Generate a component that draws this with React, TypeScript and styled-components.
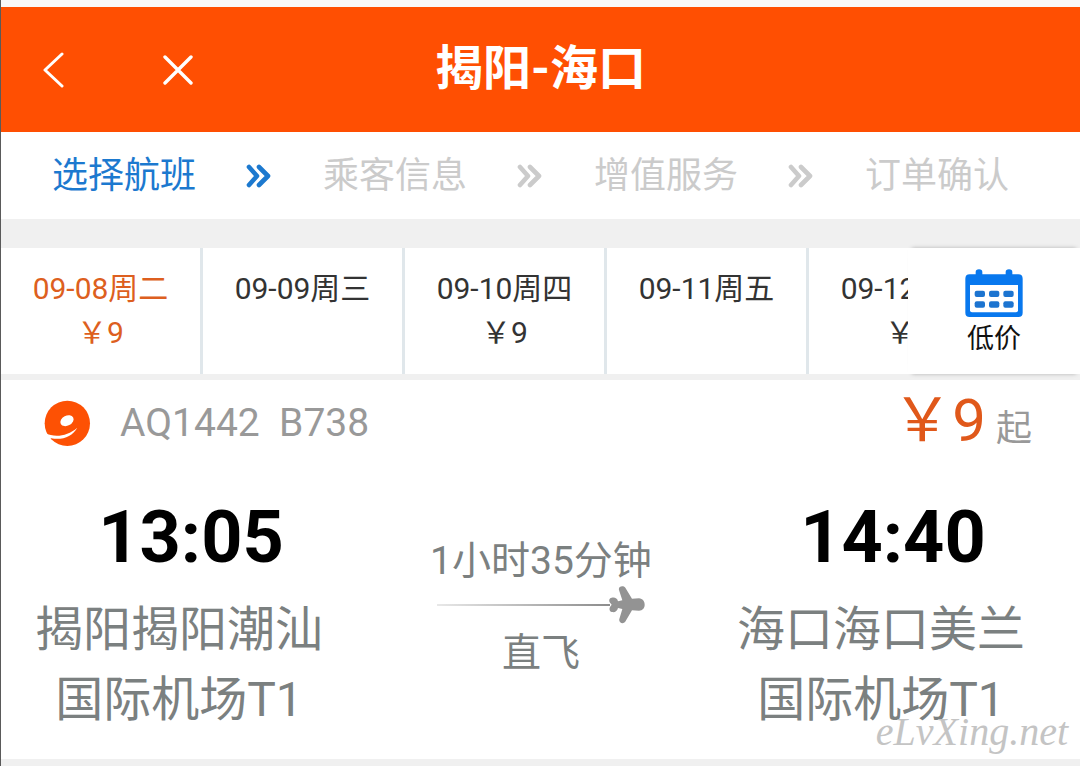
import React from "react";
import styled, { createGlobalStyle } from "styled-components";

const GlobalStyle = createGlobalStyle`
  * { box-sizing: border-box; }
  body {
    margin: 0;
    background: #f0f0f0;
    font-family: Roboto, "Noto Sans CJK SC", sans-serif;
  }
  button {
    margin: 0;
    padding: 0;
    border: 0;
    background: none;
    color: inherit;
    font: inherit;
    cursor: pointer;
  }
  h1, p, ol { margin: 0; padding: 0; }
`;

const Page = styled.div`
  position: relative;
  border-left: 1px solid #5a5a5a;
  padding-bottom: 7px;
  overflow: hidden;
`;

const StatusStrip = styled.div`
  height: 7px;
  background: #f9f8f8;
`;

const Header = styled.header`
  display: grid;
  grid-template-columns: 1fr auto 1fr;
  align-items: center;
  height: 125px;
  background: #ff4f02;
  color: #fff;
`;

const HeaderActions = styled.div`
  display: flex;
  gap: 74px;
  padding-left: 28px;
`;

const IconButton = styled.button`
  display: flex;
  align-items: center;
  justify-content: center;
  width: 50px;
  height: 50px;
`;

const Title = styled.h1`
  font-size: 48px;
  line-height: 60px;
  font-weight: 700;
  padding-bottom: 2px;
`;

const Steps = styled.ol`
  display: grid;
  grid-template-columns: repeat(4, 1fr);
  height: 87px;
  background: #fff;
  list-style: none;
`;

const Step = styled.li<{ $active?: boolean }>`
  display: flex;
  align-items: center;
  gap: 50px;
  padding-left: 51px;
  font-size: 36px;
  line-height: 48px;
  white-space: nowrap;
  color: ${(p) => (p.$active ? "#1c79cf" : "#cbcbcb")};
`;

const DateBar = styled.div`
  display: flex;
  height: 126px;
  margin: 29px 0 6px;
  background: #fff;
`;

const DateList = styled.nav`
  display: flex;
  flex: 1;
  min-width: 0;
  overflow: hidden;
`;

const DateButton = styled.button<{ $active?: boolean }>`
  flex: 0 0 202px;
  display: flex;
  flex-direction: column;
  align-items: center;
  padding-top: 19px;
  border-right: 3px solid #e0e7eb;
  font-size: 30px;
  line-height: 44px;
  white-space: nowrap;
  color: ${(p) => (p.$active ? "#dd5f20" : "#333")};
`;

const LowPrice = styled.button`
  flex: 0 0 172px;
  display: flex;
  flex-direction: column;
  align-items: center;
  gap: 7px;
  padding-top: 21px;
  background: #fff;
  box-shadow: 0 4px 4px -4px rgba(0, 0, 0, 0.25), 0 -4px 4px -4px rgba(0, 0, 0, 0.25);
  font-size: 27px;
  line-height: 30px;
  color: #111;
`;

const LowPriceLabel = styled.span`
  height: 26px;
  overflow: hidden;
`;

const Flight = styled.article`
  background: #fff;
  padding-bottom: 24px;
`;

const FlightHead = styled.div`
  display: flex;
  align-items: center;
  height: 86px;
  padding: 0 48px 0 42px;
`;

const FlightCode = styled.p`
  flex: 1;
  padding-left: 29px;
  font-size: 39px;
  line-height: 48px;
  color: #999;
  white-space: pre;
`;

const Price = styled.p`
  display: flex;
  align-items: baseline;
  gap: 10px;
  padding-top: 4px;
  font-size: 60px;
  line-height: 72px;
  color: #e0581a;
`;

const PriceSuffix = styled.span`
  font-size: 36px;
  color: #999;
`;

const Route = styled.div`
  display: flex;
  justify-content: space-between;
  padding: 30px 55px 0 34px;
`;

const Endpoint = styled.div`
  text-align: center;
`;

const Time = styled.p`
  padding-left: 24px;
  margin-bottom: 15px;
  font-size: 72px;
  line-height: 84px;
  font-weight: 700;
  color: #000;
`;

const Airport = styled.p`
  font-size: 48px;
  line-height: 70px;
  color: #7b8080;
`;

const Journey = styled.div`
  display: flex;
  flex-direction: column;
  align-items: center;
  padding: 41px 0 0 22px;
  font-size: 39px;
  line-height: 48px;
  color: #7b8080;
`;

const Track = styled.div`
  display: flex;
  align-items: center;
  width: 208px;
  margin: 1px 0 5px;
`;

const TrackLine = styled.div`
  flex: 1;
  height: 2px;
  margin-right: -1px;
  background: linear-gradient(to right, #e8e8e8, #8c8c8c);
`;

const Watermark = styled.span`
  position: absolute;
  right: 12px;
  bottom: 12px;
  font-family: "Liberation Serif", serif;
  font-style: italic;
  font-size: 40px;
  line-height: 44px;
  color: #c4c4c4;
`;

const BackIcon = () => (
  <svg width="22" height="36" viewBox="0 0 22 36" fill="none" stroke="#fff" strokeWidth="3" strokeLinecap="round" strokeLinejoin="round">
    <path d="M19 2 2 18l17 16" />
  </svg>
);

const CloseIcon = () => (
  <svg width="30" height="30" viewBox="0 0 30 30" fill="none" stroke="#fff" strokeWidth="3.4" strokeLinecap="round">
    <path d="M2 2l26 26M28 2 2 28" />
  </svg>
);

const ArrowIcon = () => (
  <svg width="26" height="24" viewBox="0 0 26 24" fill="none" stroke="currentColor" strokeWidth="4.6" strokeLinecap="round" strokeLinejoin="round">
    <path d="M3 3l8 9-8 9M13 3l9 9-9 9" />
  </svg>
);

const CalendarIcon = () => (
  <svg width="58" height="48" viewBox="0 0 174 144">
    <path fill="#0878ee" d="M32 16V9a10 8 0 0 1 20 0v7h70V9a10 8 0 0 1 20 0v7h18q13 0 13 13v102q0 13-13 13H14q-13 0-13-13V29q0-13 13-13z" />
    <path fill="#fff" d="M15 48h144v76q0 6-6 6H21q-6 0-6-6z" />
    <g fill="#1c74d0">
      {[29, 72, 115].map((x) => (
        <React.Fragment key={x}>
          <rect x={x} y="65" width="31" height="19" rx="6" />
          <rect x={x} y="97" width="31" height="19" rx="6" />
        </React.Fragment>
      ))}
    </g>
  </svg>
);

const AirlineLogo = () => (
  <svg width="48" height="48" viewBox="0 0 144 144" role="img" aria-label="九元航空">
    <circle cx="73" cy="73" r="68" fill="#fd5104" />
    <ellipse cx="72" cy="65" rx="21" ry="15" transform="rotate(-28 72 65)" fill="#fff" />
    <path fill="#fff" d="M6 102C36 117 72 112 103 86 88 112 60 124 25 118L10 122z" />
  </svg>
);

const PlaneIcon = () => (
  <svg width="36" height="38" viewBox="0 0 108 114" fill="#939393">
    <path d="M30 12C27 1 42-3 49 5L69 38 90 37C101 38 107 46 107 56S101 73 90 74L69 73 50 105C45 116 28 112 31 99L40 69 27 66C25 76 17 80 9 78 1 76 0 68 3 63L8 56 2 49C-1 43 1 36 8 35 17 33 25 36 27 46L40 43Z" />
  </svg>
);

const steps = ["选择航班", "乘客信息", "增值服务", "订单确认"];

const YEN = "\uFFE5";

const dates = [
  { label: "09-08周二", price: 9 },
  { label: "09-09周三" },
  { label: "09-10周四", price: 9 },
  { label: "09-11周五" },
  { label: "09-12周六", price: 9 },
];

export default function App() {
  return (
    <Page>
      <GlobalStyle />
      <StatusStrip />
      <Header>
        <HeaderActions>
          <IconButton type="button" aria-label="返回"><BackIcon /></IconButton>
          <IconButton type="button" aria-label="关闭"><CloseIcon /></IconButton>
        </HeaderActions>
        <Title>揭阳-海口</Title>
      </Header>

      <Steps>
        {steps.map((name, i) => (
          <Step key={name} $active={i === 0}>
            {name}
            {i < steps.length - 1 && <ArrowIcon />}
          </Step>
        ))}
      </Steps>

      <DateBar>
        <DateList>
          {dates.map((d, i) => (
            <DateButton key={d.label} type="button" $active={i === 0}>
              <span>{d.label}</span>
              {d.price && <span>{YEN + d.price}</span>}
            </DateButton>
          ))}
        </DateList>
        <LowPrice type="button">
          <CalendarIcon />
          <LowPriceLabel>低价</LowPriceLabel>
        </LowPrice>
      </DateBar>

      <Flight>
        <FlightHead>
          <AirlineLogo />
          <FlightCode>AQ1442  B738</FlightCode>
          <Price>
            {YEN + "9"}
            <PriceSuffix>起</PriceSuffix>
          </Price>
        </FlightHead>
        <Route>
          <Endpoint>
            <Time>13:05</Time>
            <Airport>揭阳揭阳潮汕<br />国际机场T1</Airport>
          </Endpoint>
          <Journey>
            <p>1小时35分钟</p>
            <Track>
              <TrackLine />
              <PlaneIcon />
            </Track>
            <p>直飞</p>
          </Journey>
          <Endpoint>
            <Time>14:40</Time>
            <Airport>海口海口美兰<br />国际机场T1</Airport>
          </Endpoint>
        </Route>
      </Flight>
      <Watermark>eLvXing.net</Watermark>
    </Page>
  );
}
